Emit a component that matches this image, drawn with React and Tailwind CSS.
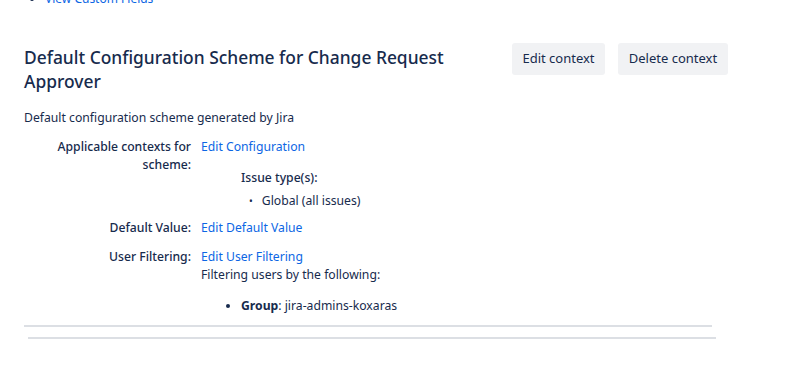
const App = () => {
  return (
    <div
      className="w-[795px] h-[385px] overflow-hidden bg-white text-[#172b4d]"
      style={{ fontFamily: '"Noto Sans", "Open Sans", sans-serif' }}
    >
      {/* cut-off link from the section above */}
      <ul className="-mt-[8px] ml-[28px] list-disc pl-[17px] text-[12px] leading-[14px]">
        <li>
          <a className="text-[#0c66e4]">View Custom Fields</a>
        </li>
      </ul>

      <div className="pl-[24px] pr-[67px]">
        {/* Header */}
        <div className="mt-[37px] flex items-start justify-between">
          <h2 className="mt-[2px] w-[450px] text-[17.4px] font-medium leading-[24px] text-[#172b4d]">
            Default Configuration Scheme for Change Request Approver
          </h2>
          <div className="flex gap-[13px]">
            <button className="h-[32px] w-[93px] rounded-[3px] bg-[#f1f2f4] text-[13px] text-[#172b4d]">
              Edit context
            </button>
            <button className="h-[32px] w-[110px] rounded-[3px] bg-[#f1f2f4] text-[13px] text-[#172b4d]">
              Delete context
            </button>
          </div>
        </div>

        <p className="mt-[16px] text-[12.2px] leading-[18px]">Default configuration scheme generated by Jira</p>

        {/* Details */}
        <div className="mt-[11px] grid grid-cols-[167px_1fr] gap-x-[10px] text-[12.2px] leading-[18px]">
          <div className="text-right font-medium">Applicable contexts for scheme:</div>
          <div>
            <a className="text-[#0c66e4]">Edit Configuration</a>
            <div className="ml-[40px] mt-[13px] font-medium">Issue type(s):</div>
            <ul className="ml-[48px] mt-[5px]">
              <li className="flex items-center gap-[9px]">
                <span className="text-[10px]">•</span>
                <span>Global (all issues)</span>
              </li>
            </ul>
          </div>

          <div className="mt-[9px] text-right font-medium">Default Value:</div>
          <div className="mt-[9px]">
            <a className="text-[#0c66e4]">Edit Default Value</a>
          </div>

          <div className="mt-[11px] text-right font-medium">User Filtering:</div>
          <div className="mt-[11px]">
            <a className="text-[#0c66e4]">Edit User Filtering</a>
            <div>Filtering users by the following:</div>
            <ul className="ml-[40px] mt-[13px] list-disc">
              <li>
                <span className="font-bold">Group</span>: jira-admins-koxaras
              </li>
            </ul>
          </div>
        </div>

        <div className="mt-[10px] h-[2px] w-[688px] bg-[#dcdfe4]" />
        <div className="ml-[4px] mt-[10px] h-[2px] w-[688px] bg-[#dcdfe4]" />
      </div>
    </div>
  );
};

export default App;
